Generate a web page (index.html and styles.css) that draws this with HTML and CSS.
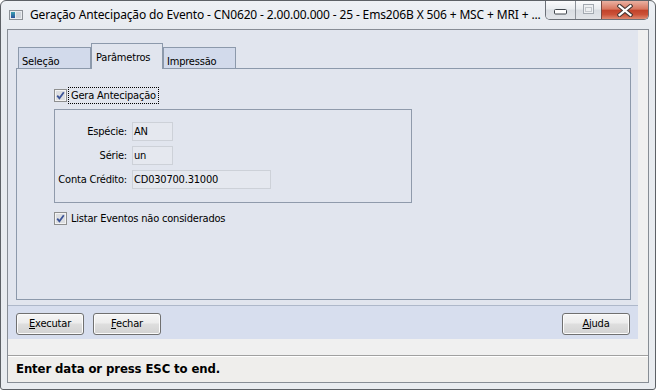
FILE: index.html
```html
<!DOCTYPE html>
<html>
<head>
<meta charset="utf-8">
<title>Geração Antecipação do Evento</title>
<link rel="stylesheet" href="styles.css">
</head>
<body>
<div class="window">
  <div class="titlebar">
    <svg class="app-icon" width="14" height="10" viewBox="0 0 14 10">
      <defs>
        <linearGradient id="ig" x1="0" y1="0" x2="0" y2="1">
          <stop offset="0" stop-color="#3aa0b0"/>
          <stop offset="1" stop-color="#27509a"/>
        </linearGradient>
      </defs>
      <rect x="0.5" y="0.5" width="13" height="9" fill="#e9ecef" stroke="#8c9197"/>
      <rect x="2" y="2" width="4" height="6" fill="url(#ig)"/>
      <rect x="7" y="2" width="5" height="6" fill="#cfd4da"/>
    </svg>
    <span class="title">Geração Antecipação do Evento - CN0620 - 2.00.00.000 - 25 - Ems206B X 506 + MSC + MRI + ...</span>
    <div class="caption-buttons">
      <div class="cbtn cbtn-min">
        <svg width="13" height="6" viewBox="0 0 13 6"><rect x="0.5" y="0.5" width="12" height="4.5" rx="1" fill="#ffffff" stroke="#3f444a"/></svg>
      </div>
      <div class="cbtn cbtn-max">
        <svg width="11" height="10" viewBox="0 0 11 10"><rect x="0.5" y="0.5" width="10" height="9" fill="#eef0f2" stroke="#a3a9b0"/><rect x="2.5" y="3.5" width="6" height="4" fill="none" stroke="#c4c8cd"/></svg>
      </div>
      <div class="cbtn cbtn-close">
        <svg width="16" height="13" viewBox="0 0 16 13"><path d="M2.5 2 L13.5 11 M13.5 2 L2.5 11" stroke="#4a3a36" stroke-width="4.2" stroke-linecap="square"/><path d="M2.5 2 L13.5 11 M13.5 2 L2.5 11" stroke="#ffffff" stroke-width="2.2" stroke-linecap="square"/></svg>
      </div>
    </div>
  </div>
  <div class="client">
    <div class="main">
      <div class="panel">
        <div class="tabs">
          <div class="tab tab-w73">Seleção</div>
          <div class="tab tab-active">Parâmetros</div>
          <div class="tab tab-w73">Impressão</div>
        </div>
        <div class="page">
          <div class="check">
            <svg class="box" width="13" height="13" viewBox="0 0 13 13">
              <rect x="0.5" y="0.5" width="12" height="12" fill="#f3f3f3" stroke="#8e8f8f"/>
              <rect x="2" y="2" width="9" height="9" fill="#dcdee1"/>
              <path d="M3.2 6.6 L5.4 9.2 L9.8 3.2" stroke="#3c5497" stroke-width="1.8" fill="none"/>
            </svg>
            <span class="lbl lbl-focus">Gera Antecipação</span>
          </div>
          <div class="group">
            <span class="label">Espécie:</span><span class="field field-short">AN</span>
            <span class="label">Série:</span><span class="field field-short">un</span>
            <span class="label">Conta Crédito:</span><span class="field field-long">CD030700.31000</span>
          </div>
          <div class="check check-second">
            <svg class="box" width="13" height="13" viewBox="0 0 13 13">
              <rect x="0.5" y="0.5" width="12" height="12" fill="#f3f3f3" stroke="#8e8f8f"/>
              <rect x="2" y="2" width="9" height="9" fill="#dcdee1"/>
              <path d="M3.2 6.6 L5.4 9.2 L9.8 3.2" stroke="#3c5497" stroke-width="1.8" fill="none"/>
            </svg>
            <span class="lbl">Listar Eventos não considerados</span>
          </div>
        </div>
      </div>
      <div class="buttonbar">
        <button class="btn"><u>E</u>xecutar</button>
        <button class="btn"><u>F</u>echar</button>
        <button class="btn btn-right"><u>A</u>juda</button>
      </div>
    </div>
    <div class="status">Enter data or press ESC to end.</div>
  </div>
</div>
</body>
</html>
```

FILE: styles.css
```css
* { box-sizing: border-box; }

html, body {
  margin: 0;
  padding: 0;
}

body {
  width: 656px;
  height: 390px;
  overflow: hidden;
  background: #ffffff;
  font-family: "DejaVu Sans Condensed", "DejaVu Sans", sans-serif;
  font-size: 11px;
  letter-spacing: -0.2px;
  color: #000000;
}

.window {
  width: 656px;
  height: 390px;
  border: 1px solid #5d6166;
  border-radius: 6px 6px 3px 3px;
  background: linear-gradient(#eef1f5, #e6eaef 30px, #e9ecf0);
  display: flex;
  flex-direction: column;
  padding: 0 6px 6px 6px;
}

.titlebar {
  height: 28px;
  flex: none;
  display: flex;
  align-items: flex-start;
}

.app-icon {
  margin: 9px 0 0 2px;
  flex: none;
}

.title {
  margin: 5px 0 0 7px;
  font-family: "Noto Sans", "Open Sans", sans-serif;
  font-size: 12px;
  letter-spacing: -0.14px;
  line-height: 18px;
  color: #000000;
  white-space: nowrap;
}

.caption-buttons {
  margin-left: auto;
  display: flex;
  height: 19px;
  border: 1px solid #6c7178;
  border-top: none;
  border-radius: 0 0 5px 5px;
  overflow: hidden;
  flex: none;
}

.cbtn {
  height: 18px;
  display: flex;
  align-items: center;
  justify-content: center;
  background: linear-gradient(#fbfbfc, #e9ecef 45%, #d9dde2 50%, #e2e5e9);
}

.cbtn-min {
  width: 29px;
  padding-top: 4px;
}

.cbtn-max {
  width: 26px;
  border-left: 1px solid #8e939a;
  padding-bottom: 2px;
}

.cbtn-close {
  width: 47px;
  border-left: 1px solid #7a4a42;
  background: linear-gradient(#eab1a2, #d8765f 45%, #c2432b 52%, #cb5238 75%, #df8a72);
}

.client {
  flex: 1;
  border: 1px solid #878d95;
  background: #f0f0f0;
  display: flex;
  flex-direction: column;
}

.main {
  width: 630px;
}

.panel {
  height: 275px;
  background: #e1e5ee;
  padding: 13px 0 0 8px;
}

.tabs {
  display: flex;
  align-items: flex-end;
  height: 26px;
  margin: 0 0 -1px 2px;
  position: relative;
  z-index: 1;
}

.tab {
  height: 22px;
  border: 1px solid #8c99ab;
  background: #d2daeb;
  padding: 7px 0 0 3px;
  line-height: 13px;
  white-space: nowrap;
}

.tab-w73 {
  width: 73px;
}

.tab-active {
  width: 72px;
  height: 26px;
  border-bottom: none;
  background: #e1e5ee;
  padding-left: 4px;
}

.page {
  width: 615px;
  height: 232px;
  border: 1px solid #8c99ab;
  padding: 18px 0 0 37px;
}

.check {
  display: flex;
  align-items: center;
  height: 17px;
}

.check-second {
  margin-top: 7px;
}

.box {
  flex: none;
  margin-right: 1px;
}

.lbl {
  border: 1px dotted transparent;
  padding: 0 2px 0 2px;
  line-height: 15px;
  white-space: nowrap;
}

.lbl-focus {
  border-color: #000000;
}

.group {
  margin-top: 5px;
  width: 358px;
  height: 94px;
  border: 1px solid #8f9aab;
  padding-top: 12px;
  display: grid;
  grid-template-columns: 72px auto;
  grid-auto-rows: 19px;
  row-gap: 5px;
  column-gap: 5px;
  align-content: start;
  justify-items: start;
}

.label {
  justify-self: end;
  line-height: 19px;
  white-space: nowrap;
}

.field {
  height: 19px;
  border: 1px solid #cdd1d8;
  background: #e5e8ef;
  padding: 0 0 0 1px;
  line-height: 17px;
  white-space: nowrap;
}

.field-short {
  width: 41px;
}

.field-long {
  width: 139px;
}

.buttonbar {
  height: 34px;
  border-top: 1px solid #aeb8ca;
  background: #d7deee;
  padding: 7px 8px 0 8px;
  display: flex;
  align-items: flex-start;
  column-gap: 9px;
}

.btn {
  width: 68px;
  height: 22px;
  border: 1px solid #707070;
  border-radius: 3px;
  background: linear-gradient(#f6f6f6, #ececec 45%, #dedede 50%, #d2d2d2);
  box-shadow: inset 0 0 0 1px #fbfbfb;
  font-family: "DejaVu Sans Condensed", "DejaVu Sans", sans-serif;
  font-size: 11px;
  letter-spacing: -0.2px;
  line-height: 20px;
  color: #000000;
  padding: 0;
  text-align: center;
}

.btn-right {
  margin-left: auto;
}

.status {
  margin-top: 16px;
  flex: 1;
  border-top: 1px solid #a0a0a0;
  background: #efeeec;
  box-shadow: inset 0 1px 0 #ffffff;
  padding: 4px 0 0 8px;
  font-weight: bold;
  font-size: 13px;
  letter-spacing: -0.1px;
  line-height: 18px;
  white-space: nowrap;
}
```
